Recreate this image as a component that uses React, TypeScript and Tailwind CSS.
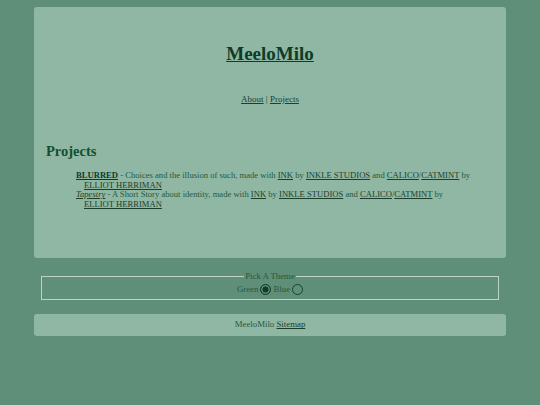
import { useState } from 'react'

// Single-page portfolio: header card with nav, project list, theme picker and footer.

const serif = { fontFamily: '"Liberation Serif", Georgia, serif' }

const link = 'underline text-[#1b3f2d]'

function Credit() {
  return (
    <>
      made with <a href="#" className={link}>INK</a> by{' '}
      <a href="#" className={link}>INKLE STUDIOS</a> and{' '}
      <a href="#" className={link}>CALICO</a>/
      <a href="#" className={link}>CATMINT</a> by{' '}
      <a href="#" className={link}>ELLIOT HERRIMAN</a>
    </>
  )
}

function Radio({ checked, onChange }: { checked: boolean; onChange: () => void }) {
  return (
    <input
      type="radio"
      checked={checked}
      onChange={onChange}
      className="h-[11px] w-[11px] appearance-none rounded-full border border-[#1b3f2d] checked:bg-[#0f3b27] checked:shadow-[inset_0_0_0_1.5px_#5f8f79]"
    />
  )
}

export default function App() {
  const [theme, setTheme] = useState<'green' | 'blue'>('green')

  return (
    <div className="min-h-[405px] bg-[#5f8f79] px-[34px] pt-[7px] text-[#245a40]" style={serif}>
      <main className="h-[251px] rounded-[3px] bg-[#90b7a4] px-3 pt-[37px]">
        <h1 className="text-center text-[19px] font-bold leading-none">
          <a href="#" className="text-[#0f3b27] underline">MeeloMilo</a>
        </h1>
        <nav className="mt-[30px] text-center text-[9px] text-[#1b3f2d]">
          <a href="#" className="underline">About</a> | <a href="#" className="underline">Projects</a>
        </nav>
        <h2 className="mt-[34px] text-[14.5px] font-bold text-[#12502f]">Projects</h2>
        <ul className="mt-[9px] pl-[30px] pr-[20px] text-[8.6px] leading-[9.5px]">
          <li className="pl-[8px] -indent-[8px]">
            <a href="#" className="font-bold underline text-[#0f3b27]">BLURRED</a> - Choices and the illusion of such, <Credit />
          </li>
          <li className="pl-[8px] -indent-[8px]">
            <a href="#" className={'italic ' + link}>Tapestry</a> - A Short Story about identity, <Credit />
          </li>
        </ul>
      </main>

      <fieldset className="mx-[7px] mt-[13px] border border-[#bcd3c6] px-2 pb-[4px] pt-[2px] text-center text-[8.8px] leading-[11px]">
        <legend className="mx-auto px-[1px]">Pick A Theme</legend>
        <div className="flex items-center justify-center gap-[2px]">
          <span>Green</span>
          <Radio checked={theme === 'green'} onChange={() => setTheme('green')} />
          <span>Blue</span>
          <Radio checked={theme === 'blue'} onChange={() => setTheme('blue')} />
        </div>
      </fieldset>

      <footer className="mt-[14px] flex h-[22px] items-center justify-center rounded-[3px] bg-[#90b7a4] text-[8.8px]">
        MeeloMilo&nbsp;<a href="#" className={link}>Sitemap</a>
      </footer>
    </div>
  )
}
